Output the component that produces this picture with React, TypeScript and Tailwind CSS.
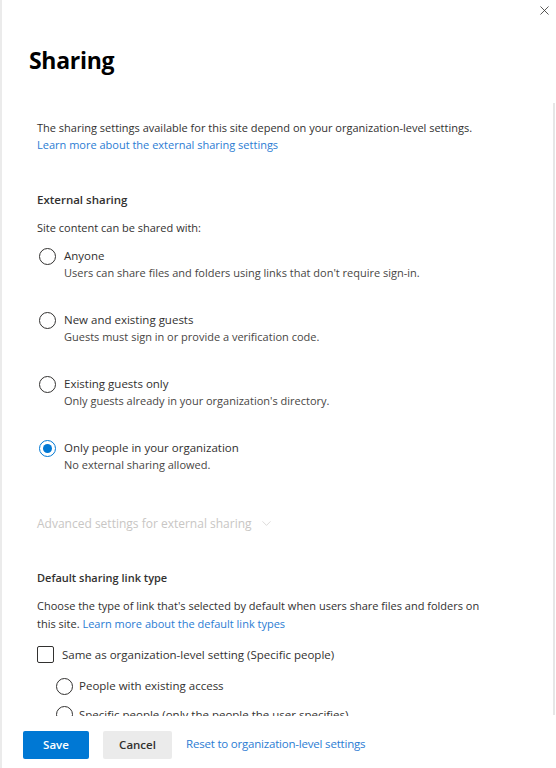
import { X, ChevronDown } from "lucide-react";

const Radio = ({ checked = false }: { checked?: boolean }) => (
  <span className={`mt-[0.5px] flex h-[17px] w-[17px] shrink-0 items-center justify-center rounded-full border ${checked ? "border-[#0078d4]" : "border-[#323130]"} bg-white`}>
    {checked && <span className="h-[9px] w-[9px] rounded-full bg-[#0078d4]" />}
  </span>
);

const options = [
  { label: "Anyone", desc: "Users can share files and folders using links that don't require sign-in." },
  { label: "New and existing guests", desc: "Guests must sign in or provide a verification code." },
  { label: "Existing guests only", desc: "Only guests already in your organization's directory." },
  { label: "Only people in your organization", desc: "No external sharing allowed.", checked: true },
];

export default function App() {
  return (
    <div className="relative flex h-[768px] w-[556px] flex-col overflow-hidden border-l-2 border-[#ebebeb] bg-white text-[#323130]" style={{ fontFamily: '"Open Sans", sans-serif' }}>
      <button className="absolute right-[3px] top-[2px] p-[1px] text-[#323130]">
        <X size={15} strokeWidth={1.3} />
      </button>
      <div className="absolute right-[1px] top-[103px] h-[612px] w-[2px] bg-[#e6e6e6]" />

      <h1 className="pl-[27px] pt-[44px] text-[23px] font-bold leading-[32px] tracking-[-0.3px] text-black">Sharing</h1>

      <div className="flex-1 overflow-hidden pl-[35px] pt-[43px] text-[11px] leading-[17px]">
        <div className="w-[446px]">
          <p>The sharing settings available for this site depend on your organization-level settings.</p>
          <a className="text-[#2b7cd3]">Learn more about the external sharing settings</a>

          <h2 className="mt-[38px] text-[11.5px] font-semibold">External sharing</h2>
          <p className="mt-[11px]">Site content can be shared with:</p>

          <div className="mt-[11px] flex flex-col gap-[30px]">
            {options.map((o) => (
              <div key={o.label} className="flex gap-[8px] pl-[2px]">
                <Radio checked={o.checked} />
                <div className="flex flex-col">
                  <span className="text-[11.5px]">{o.label}</span>
                  <span className="text-[#484644]">{o.desc}</span>
                </div>
              </div>
            ))}
          </div>

          <div className="mt-[42px] flex items-center gap-[7px] text-[#c8c6c4]">
            <span className="text-[12px]">Advanced settings for external sharing</span>
            <ChevronDown size={15} strokeWidth={1} />
          </div>

          <h2 className="mt-[37px] font-semibold">Default sharing link type</h2>
          <p className="mt-[11px] leading-[18px]">
            Choose the type of link that's selected by default when users share files and folders on this site.{" "}
            <a className="text-[#2b7cd3]">Learn more about the default link types</a>
          </p>

          <label className="mt-[13px] flex items-center gap-[8px]">
            <span className="h-[17px] w-[17px] shrink-0 rounded-[2px] border border-[#323130]" />
            <span className="text-[11.5px]">Same as organization-level setting (Specific people)</span>
          </label>

          <div className="mt-[14px] flex flex-col gap-[11px] pl-[19px]">
            <div className="flex items-center gap-[6px]">
              <Radio />
              <span className="text-[11.5px]">People with existing access</span>
            </div>
            <div className="flex items-center gap-[6px]">
              <Radio />
              <span className="text-[11.5px]">Specific people (only the people the user specifies)</span>
            </div>
          </div>
        </div>
      </div>

      <div className="flex h-[52px] shrink-0 items-start gap-[14px] pl-[21px] pt-[15px] text-[11.5px] font-semibold">
        <button className="h-[28px] w-[66px] rounded-[2px] bg-[#0078d4] text-white">Save</button>
        <button className="h-[28px] w-[69px] rounded-[2px] bg-[#ebebeb] text-[#323130]">Cancel</button>
        <a className="self-center pb-[12px] font-normal tracking-[-0.2px] text-[#2b7cd3]">Reset to organization-level settings</a>
      </div>
    </div>
  );
}
